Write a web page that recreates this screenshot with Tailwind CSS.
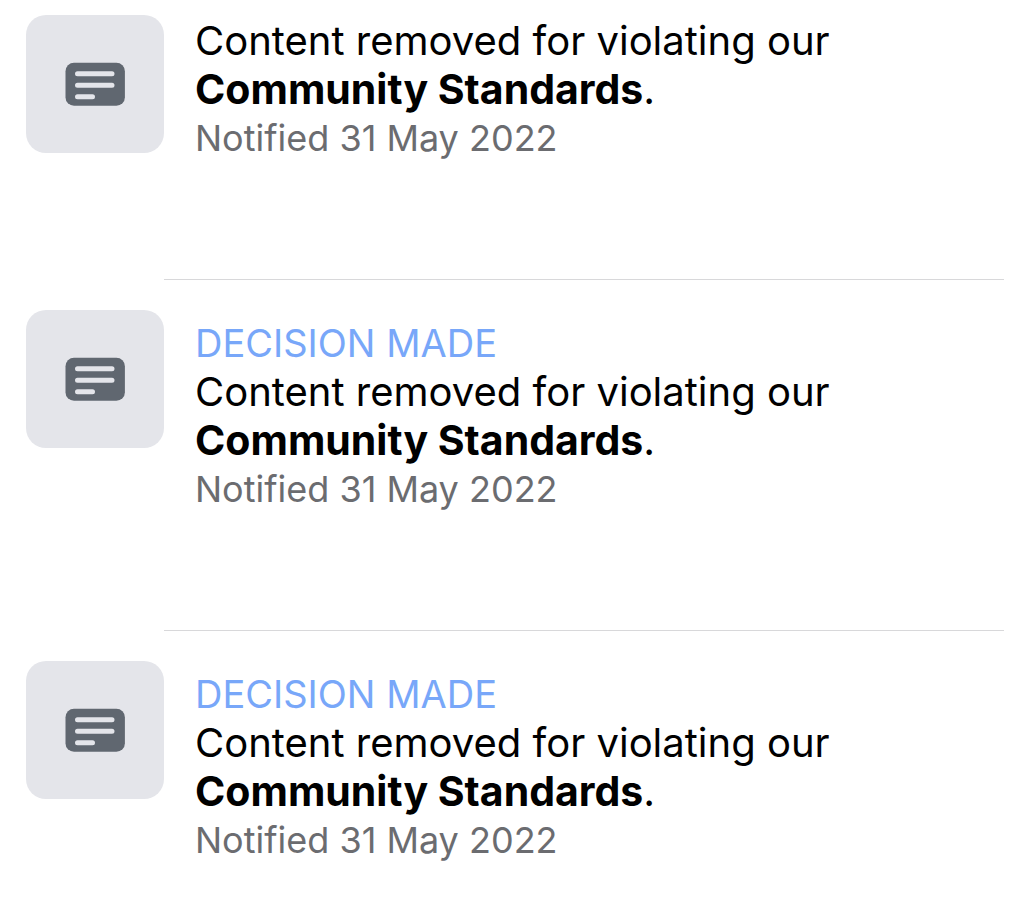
<!DOCTYPE html>
<html lang="en">
<head>
    <meta charset="UTF-8">
    <meta name="viewport" content="width=device-width, initial-scale=1.0">
    <title>Support Inbox</title>
    <script src="https://cdn.jsdelivr.net/npm/@tailwindcss/browser@4"></script>
</head>
<body class="bg-white text-black font-['Inter',sans-serif]">
    <!-- Shared post icon -->
    <svg class="hidden">
        <symbol id="post-icon" viewBox="0 0 60 44">
            <rect x="0.5" y="0.8" width="59.4" height="43" rx="8.5" fill="#606770"/>
            <path d="M12.5 11.7H47M12.5 23.2H47M12.5 34.8H27.5" stroke="#e4e5ea" stroke-width="5" stroke-linecap="round"/>
        </symbol>
    </svg>

    <ul class="pl-[26px] pr-5">
        <!-- First notification -->
        <li class="flex items-start pt-[15px]">
            <div class="w-[138px] h-[138px] shrink-0 rounded-[20px] bg-[#e4e5ea] flex items-center justify-center">
                <svg class="w-[60px] h-11"><use href="#post-icon"/></svg>
            </div>
            <div class="grow border-b border-[#d8d8da] pl-[31px] pt-px pb-[116px]">
                <p class="text-[40px] leading-[49px]">Content removed for violating our</p>
                <p class="text-[41px] leading-[49px]"><strong class="font-bold">Community Standards</strong>.</p>
                <p class="text-[36px] leading-[49px] text-[#6b6c70]">Notified 31 May 2022</p>
            </div>
        </li>

        <!-- Decision made -->
        <li class="flex items-start pt-[30px]">
            <div class="w-[138px] h-[138px] shrink-0 rounded-[20px] bg-[#e4e5ea] flex items-center justify-center">
                <svg class="w-[60px] h-11"><use href="#post-icon"/></svg>
            </div>
            <div class="grow border-b border-[#d8d8da] pl-[31px] pt-[9px] pb-[116px]">
                <p class="text-[38px] leading-[48px] text-[#78a7f9]">DECISION MADE</p>
                <p class="text-[40px] leading-[49px]">Content removed for violating our</p>
                <p class="text-[41px] leading-[49px]"><strong class="font-bold">Community Standards</strong>.</p>
                <p class="text-[36px] leading-[49px] text-[#6b6c70]">Notified 31 May 2022</p>
            </div>
        </li>

        <li class="flex items-start pt-[30px]">
            <div class="w-[138px] h-[138px] shrink-0 rounded-[20px] bg-[#e4e5ea] flex items-center justify-center">
                <svg class="w-[60px] h-11"><use href="#post-icon"/></svg>
            </div>
            <div class="grow pl-[31px] pt-[9px] pb-6">
                <p class="text-[38px] leading-[48px] text-[#78a7f9]">DECISION MADE</p>
                <p class="text-[40px] leading-[49px]">Content removed for violating our</p>
                <p class="text-[41px] leading-[49px]"><strong class="font-bold">Community Standards</strong>.</p>
                <p class="text-[36px] leading-[49px] text-[#6b6c70]">Notified 31 May 2022</p>
            </div>
        </li>
    </ul>
</body>
</html>
